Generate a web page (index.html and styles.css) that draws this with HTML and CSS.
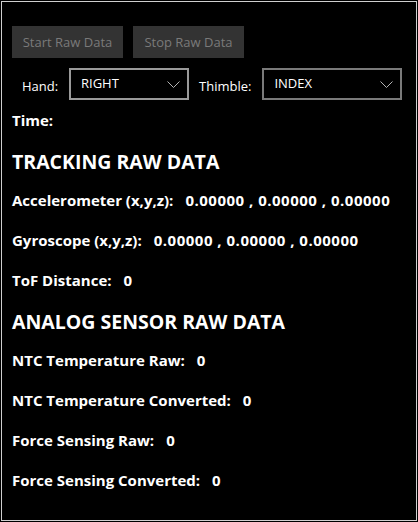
FILE: index.html
```html
<!DOCTYPE html>
<html>
<head>
<meta charset="utf-8">
<link rel="stylesheet" href="styles.css">
</head>
<body>
<div class="window">
  <div class="toolbar">
    <button class="btn" disabled>Start Raw Data</button>
    <button class="btn" disabled>Stop Raw Data</button>
  </div>
  <div class="selectors">
    <span class="sel-label">Hand:</span>
    <div class="combo combo-hand">
      <span class="combo-value">RIGHT</span>
      <svg class="chev" width="13" height="7" viewBox="0 0 13 7"><path d="M0.5 0.5 L6.5 6.5 L12.5 0.5" fill="none" stroke="#b4b4b4" stroke-width="1"/></svg>
    </div>
    <span class="sel-label">Thimble:</span>
    <div class="combo combo-thimble">
      <span class="combo-value">INDEX</span>
      <svg class="chev" width="13" height="7" viewBox="0 0 13 7"><path d="M0.5 0.5 L6.5 6.5 L12.5 0.5" fill="none" stroke="#b4b4b4" stroke-width="1"/></svg>
    </div>
  </div>
  <div class="rows">
    <div class="row"><span class="lbl">Time:</span></div>
    <div class="row heading">TRACKING RAW DATA</div>
    <div class="row"><span class="lbl">Accelerometer (x,y,z):</span><span class="val">0.00000 , 0.00000 , 0.00000</span></div>
    <div class="row"><span class="lbl">Gyroscope (x,y,z):</span><span class="val">0.00000 , 0.00000 , 0.00000</span></div>
    <div class="row"><span class="lbl">ToF Distance:</span><span class="val">0</span></div>
    <div class="row heading">ANALOG SENSOR RAW DATA</div>
    <div class="row"><span class="lbl">NTC Temperature Raw:</span><span class="val">0</span></div>
    <div class="row"><span class="lbl">NTC Temperature Converted:</span><span class="val">0</span></div>
    <div class="row"><span class="lbl">Force Sensing Raw:</span><span class="val">0</span></div>
    <div class="row"><span class="lbl">Force Sensing Converted:</span><span class="val">0</span></div>
  </div>
</div>
</body>
</html>
```
FILE: styles.css
```css
html, body {
  margin: 0;
  padding: 0;
  background: #000;
}
body {
  padding: 1px;
  font-family: "Open Sans", "Noto Sans", sans-serif;
  color: #fff;
}
.window {
  box-sizing: border-box;
  width: 416px;
  height: 520px;
  border: 1px solid #cfcfcf;
  background: #000;
  padding: 24px 0 0 10px;
}
.toolbar {
  display: flex;
  gap: 10px;
}
.btn {
  width: 111px;
  height: 32px;
  border: none;
  background: #333333;
  color: #7a7a7a;
  font-family: "Open Sans", sans-serif;
  font-size: 13px;
  padding: 0 0 1px 0;
}
.selectors {
  display: flex;
  align-items: center;
  margin-top: 10px;
}
.sel-label {
  font-size: 13px;
  color: #fff;
  margin-top: 3px;
}
.sel-label:first-child {
  margin-left: 10px;
  width: 47px;
}
.combo {
  box-sizing: border-box;
  height: 32px;
  border: 2px solid #9a9a9a;
  display: flex;
  align-items: center;
  justify-content: space-between;
  padding: 0 7px 0 10px;
  font-size: 13px;
}
.combo-value {
  margin-top: -2px;
}
.chev {
  margin-top: 1px;
}
.combo-hand {
  width: 120px;
  margin-right: 10px;
}
.combo-thimble {
  width: 140px;
  border-color: #7a7a7a;
  margin-left: 11px;
}
.rows {
  margin-top: 0;
}
.row {
  height: 40px;
  display: flex;
  align-items: center;
  font-weight: 700;
  font-size: 15px;
  white-space: nowrap;
}
.val {
  margin-left: 12px;
  letter-spacing: 0.5px;
}
.heading {
  font-size: 19.5px;
  padding-top: 2px;
  box-sizing: border-box;
}
```
